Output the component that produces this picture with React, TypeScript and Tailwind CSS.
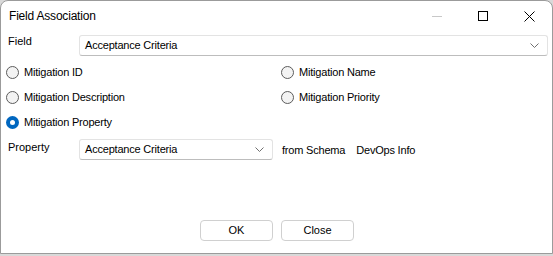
import React from "react";

const font = { fontFamily: '"Liberation Sans", Arial, sans-serif' };

function Chevron() {
  return (
    <svg width="9" height="5" viewBox="0 0 9 5" className="shrink-0">
      <path d="M0.5 0.5 L4.5 4.5 L8.5 0.5" fill="none" stroke="#707070" strokeWidth="1" />
    </svg>
  );
}

function Combo({ value, className }: { value: string; className: string }) {
  return (
    <div
      className={`h-[21px] flex items-center justify-between pl-[5px] pr-[8px] bg-white border border-[#e3e3e3] border-b-[#bdbdbd] rounded-[3px] text-[11px] tracking-[-0.2px] text-black ${className}`}
    >
      <span>{value}</span>
      <Chevron />
    </div>
  );
}

function Radio({ label, checked }: { label: string; checked?: boolean }) {
  return (
    <div className="flex items-center gap-[5px] h-[25px]">
      {checked ? (
        <span className="w-[13px] h-[13px] rounded-full bg-[#0067c0] flex items-center justify-center">
          <span className="w-[5px] h-[5px] rounded-full bg-white" />
        </span>
      ) : (
        <span className="w-[13px] h-[13px] rounded-full border border-[#5c5c5c] bg-[#f3f3f3]" />
      )}
      <span className="text-[11px] tracking-[-0.2px] text-black">{label}</span>
    </div>
  );
}

function Button({ label }: { label: string }) {
  return (
    <div className="w-[73px] h-[21px] flex items-center justify-center bg-white border border-[#d0d0d0] rounded-[4px] text-[11px] text-black">
      {label}
    </div>
  );
}

export default function App() {
  return (
    <div className="w-[553px] h-[256px] bg-[#d9d9d9]" style={font}>
      <div className="h-[254px] bg-white border border-[#9b9b9b] rounded-t-[8px] flex flex-col">
        <div className="h-[30px] flex items-center justify-between pl-[8px]">
          <span className="text-[12px] tracking-[-0.2px] text-black">Field Association</span>
          <div className="flex items-center h-full">
            <div className="w-[46px] h-full flex items-center justify-center">
              <span className="w-[10px] h-px bg-[#c8c8c8]" />
            </div>
            <div className="w-[46px] h-full flex items-center justify-center">
              <span className="w-[10px] h-[10px] border border-black" />
            </div>
            <div className="w-[46px] h-full flex items-center justify-center">
              <svg width="11" height="11" viewBox="0 0 11 11">
                <path d="M0.5 0.5 L10.5 10.5 M10.5 0.5 L0.5 10.5" stroke="#000" strokeWidth="1" />
              </svg>
            </div>
          </div>
        </div>

        <div className="flex items-start mt-[4px]">
          <span className="w-[78px] pl-[7px] text-[11px] text-black -mt-[2px]">Field</span>
          <Combo value="Acceptance Criteria" className="w-[469px]" />
        </div>

        <div className="grid grid-cols-[275px_1fr] pl-[5px] mt-[4px]">
          <Radio label="Mitigation ID" />
          <Radio label="Mitigation Name" />
          <Radio label="Mitigation Description" />
          <Radio label="Mitigation Priority" />
          <Radio label="Mitigation Property" checked />
        </div>

        <div className="flex items-start mt-[4px]">
          <span className="w-[78px] pl-[7px] text-[11px] text-black">Property</span>
          <Combo value="Acceptance Criteria" className="w-[194px]" />
          <span className="ml-[9px] pt-[3px] text-[11px] tracking-[-0.2px] text-black">from Schema</span>
          <span className="ml-[11px] pt-[3px] text-[11px] tracking-[-0.2px] text-black">DevOps Info</span>
        </div>

        <div className="flex-1" />
        <div className="flex justify-center gap-[8px] pl-[1px] mb-[12px]">
          <Button label="OK" />
          <Button label="Close" />
        </div>
      </div>
    </div>
  );
}
